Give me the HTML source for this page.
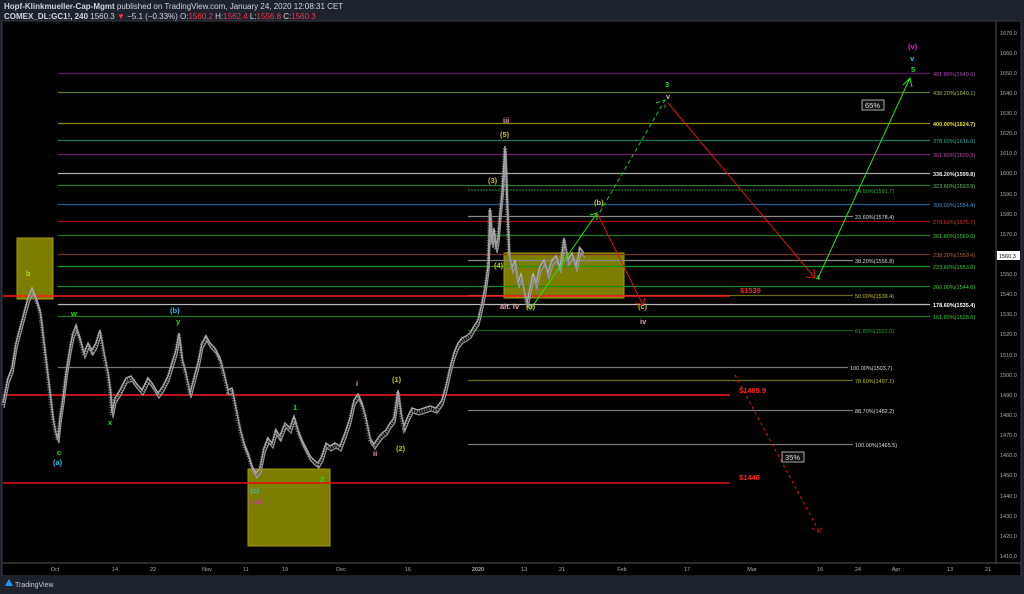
<!DOCTYPE html>
<html><head><meta charset="utf-8"><style>
html,body{margin:0;padding:0;background:#1e222d;width:1024px;height:594px;overflow:hidden;font-family:"Liberation Sans",sans-serif}
.h1{position:absolute;left:4px;top:2px;font-size:8px;color:#d1d4dc}
.h2{position:absolute;left:4px;top:12px;font-size:8px;color:#d1d4dc}
</style></head><body>
<div class="h1"><b>Hopf-Klinkmueller-Cap-Mgmt</b> published on TradingView.com, January 24, 2020 12:08:31 CET</div>
<div class="h2"><b>COMEX_DL:GC1!, 240</b> 1560.3 <span style="color:#f23645">▼</span> −5.1 (−0.33%) O:<span style="color:#f23645">1560.2</span> H:<span style="color:#f23645">1562.4</span> L:<span style="color:#f23645">1556.8</span> C:<span style="color:#f23645">1560.3</span></div>
<svg width="1024" height="594" style="position:absolute;left:0;top:0" font-family="Liberation Sans, sans-serif">
<rect x="2" y="21" width="1019" height="555" fill="#000" stroke="#363a45"/>
<line x1="996" y1="21" x2="996" y2="563" stroke="#555"/>
<line x1="2" y1="563" x2="1021" y2="563" stroke="#555"/>
<rect x="0" y="576" width="1024" height="18" fill="#1e222d"/>
<g font-size="5.5" fill="#aaa">
<text x="1000" y="35">1670.0</text><text x="1000" y="55">1660.0</text><text x="1000" y="75">1650.0</text><text x="1000" y="95">1640.0</text><text x="1000" y="115">1630.0</text><text x="1000" y="135">1620.0</text><text x="1000" y="155">1610.0</text><text x="1000" y="175">1600.0</text><text x="1000" y="196">1590.0</text><text x="1000" y="216">1580.0</text><text x="1000" y="236">1570.0</text><text x="1000" y="276">1550.0</text><text x="1000" y="296">1540.0</text><text x="1000" y="316">1530.0</text><text x="1000" y="336">1520.0</text><text x="1000" y="357">1510.0</text><text x="1000" y="377">1500.0</text><text x="1000" y="397">1490.0</text><text x="1000" y="417">1480.0</text><text x="1000" y="437">1470.0</text><text x="1000" y="457">1460.0</text><text x="1000" y="477">1450.0</text><text x="1000" y="498">1440.0</text><text x="1000" y="518">1430.0</text><text x="1000" y="538">1420.0</text><text x="1000" y="558">1410.0</text>
</g>
<rect x="997" y="251" width="23" height="9" fill="#fff"/><text x="999" y="258" font-size="5.5" fill="#000">1560.3</text>
<g font-size="5.5" fill="#aaa" text-anchor="middle">
<text x="55" y="571">Oct</text><text x="115" y="571">14</text><text x="153" y="571">22</text><text x="207" y="571">Nov</text><text x="246" y="571">11</text><text x="285" y="571">19</text><text x="341" y="571">Dec</text><text x="408" y="571">16</text><text x="478" y="571" font-weight="bold">2020</text><text x="524" y="571">13</text><text x="562" y="571">21</text><text x="622" y="571">Feb</text><text x="687" y="571">17</text><text x="752" y="571">Mar</text><text x="820" y="571">16</text><text x="858" y="571">24</text><text x="896" y="571">Apr</text><text x="950" y="571">13</text><text x="988" y="571">21</text>
</g>
<path d="M5 586 l4 -7 l4 7z" fill="#2196f3"/><text x="15" y="587" font-size="7" fill="#ccc">TradingView</text>
<rect x="17" y="238" width="36" height="61" fill="#7d7d00" stroke="#a0a000"/>
<rect x="248" y="469" width="82" height="77" fill="#7d7d00" stroke="#a0a000"/>
<rect x="504" y="253" width="120" height="45" fill="#7d7d00" stroke="#a0a000"/>
<g stroke-width="1.3">
<line x1="58" y1="73.5" x2="930" y2="73.5" stroke="#5a1a6a"/>
<line x1="58" y1="92.5" x2="930" y2="92.5" stroke="#5b7e23"/>
<line x1="58" y1="123.5" x2="930" y2="123.5" stroke="#8a8a10"/>
<line x1="58" y1="140.5" x2="930" y2="140.5" stroke="#1a7a60"/>
<line x1="58" y1="154.5" x2="930" y2="154.5" stroke="#7a1a6a"/>
<line x1="58" y1="173.5" x2="930" y2="173.5" stroke="#aaa"/>
<line x1="58" y1="185.5" x2="930" y2="185.5" stroke="#2a7a2a"/>
<line x1="58" y1="204.5" x2="930" y2="204.5" stroke="#1e5e8e"/>
<line x1="58" y1="221.5" x2="930" y2="221.5" stroke="#a01010"/>
<line x1="58" y1="235.5" x2="930" y2="235.5" stroke="#1a7a1a"/>
<line x1="58" y1="254.5" x2="930" y2="254.5" stroke="#7a3020"/>
<line x1="58" y1="266.5" x2="930" y2="266.5" stroke="#1a9a1a"/>
<line x1="58" y1="286.5" x2="930" y2="286.5" stroke="#1a8a1a"/>
<line x1="58" y1="304.5" x2="930" y2="304.5" stroke="#bbb"/>
<line x1="58" y1="316.5" x2="930" y2="316.5" stroke="#1a7a1a"/>
<line x1="58" y1="367.5" x2="848" y2="367.5" stroke="#777"/>
<line x1="468" y1="190" x2="853" y2="190" stroke="#1a7a1a" stroke-dasharray="2,1"/>
<line x1="468" y1="216.5" x2="853" y2="216.5" stroke="#888"/>
<line x1="468" y1="260.5" x2="853" y2="260.5" stroke="#888"/>
<line x1="468" y1="295.5" x2="853" y2="295.5" stroke="#6a6a10"/>
<line x1="468" y1="330.5" x2="853" y2="330.5" stroke="#1a5a1a"/>
<line x1="468" y1="380.5" x2="853" y2="380.5" stroke="#6a6a10"/>
<line x1="468" y1="410.5" x2="853" y2="410.5" stroke="#777"/>
<line x1="468" y1="444.5" x2="853" y2="444.5" stroke="#777"/>
<line x1="3" y1="296" x2="730" y2="296" stroke="#ff1a1a" stroke-width="1.6"/>
<line x1="3" y1="395" x2="730" y2="395" stroke="#ff1a1a" stroke-width="1.6"/>
<line x1="3" y1="483" x2="730" y2="483" stroke="#e01010" stroke-width="1.6"/>
</g>
<g font-size="5.5">
<text x="933" y="76" fill="#b040c0">461.80%(1649.6)</text>
<text x="933" y="95" fill="#a0c040">438.20%(1640.1)</text>
<text x="933" y="126" fill="#e0e020" font-weight="bold">400.00%(1624.7)</text>
<text x="933" y="143" fill="#30b0a0">378.60%(1616.0)</text>
<text x="933" y="157" fill="#c040b0">361.80%(1609.3)</text>
<text x="933" y="176" fill="#eee" font-weight="bold">338.20%(1599.8)</text>
<text x="933" y="188" fill="#60c060">323.60%(1593.9)</text>
<text x="933" y="207" fill="#4090d0">300.00%(1584.4)</text>
<text x="933" y="224" fill="#e03030">278.60%(1575.7)</text>
<text x="933" y="238" fill="#30d030">261.80%(1569.0)</text>
<text x="933" y="257" fill="#c06040">238.20%(1559.4)</text>
<text x="933" y="269" fill="#30d030">223.60%(1553.6)</text>
<text x="933" y="289" fill="#30d030">200.00%(1544.0)</text>
<text x="933" y="307" fill="#fff" font-weight="bold">178.60%(1535.4)</text>
<text x="933" y="319" fill="#30d030">161.80%(1528.6)</text>
<text x="855" y="193" fill="#30b030">14.60%(1591.7)</text>
<text x="855" y="219" fill="#ddd">23.60%(1578.4)</text>
<text x="855" y="263" fill="#ddd">38.20%(1556.8)</text>
<text x="855" y="298" fill="#c0c020">50.00%(1539.4)</text>
<text x="855" y="333" fill="#30a030">61.80%(1522.0)</text>
<text x="850" y="370" fill="#ddd">100.00%(1503.7)</text>
<text x="855" y="383" fill="#c0c020">78.60%(1497.1)</text>
<text x="855" y="413" fill="#ddd">88.70%(1482.2)</text>
<text x="855" y="447" fill="#ddd">100.00%(1465.5)</text>
</g>
<defs>
<polyline id="pp" fill="none" points="3,405 8,380 12,370 16,345 20,330 24,315 28,300 32,290 36,300 40,312 44,345 47,370 50,395 53,420 56,435 58,440 60,420 63,400 66,375 70,350 73,335 76,328 80,340 84,355 88,345 92,352 96,345 100,332 104,355 108,375 110,390 112,415 115,400 120,392 126,380 131,378 136,385 142,392 148,380 152,385 158,395 163,388 168,378 172,365 176,352 179,335 182,360 186,375 190,395 194,380 198,365 202,345 206,338 210,345 215,350 220,360 224,375 228,392 232,390 236,410 240,430 244,445 248,455 252,468 256,475 260,470 264,450 268,440 272,445 276,432 280,438 285,425 290,430 294,418 298,432 302,442 306,450 310,458 314,462 318,465 322,458 326,445 330,448 335,445 340,448 345,435 350,420 354,402 358,396 362,405 366,420 370,440 374,446 378,440 382,435 386,432 390,425 394,420 398,392 401,415 404,428 408,418 412,410 418,412 424,410 430,408 436,410 442,402 446,388 450,370 454,355 458,345 462,340 466,338 470,335 474,328 478,322 482,305 485,290 488,268 490,210 492,245 494,230 496,250 498,240 500,215 502,195 505,148 507,205 509,255 512,270 515,262 518,285 521,275 524,292 527,305 530,290 533,275 536,285 540,268 544,262 548,275 552,262 556,258 560,270 564,240 568,262 572,255 576,268 580,250 584,255"/>
</defs>
<use href="#pp" stroke="#777" stroke-width="4" stroke-dasharray="1,1.5"/>
<use href="#pp" stroke="#aaa" stroke-width="1.4" transform="translate(0,-2)"/>
<use href="#pp" stroke="#999" stroke-width="1.2" transform="translate(1,3)"/>
<g fill="none" stroke-width="1">
<path d="M530 310 L597 213 M590 215 l7 -2 l0 7" stroke="#20e020"/>
<path d="M597 213 L643 305 M635 303 l8 2 l2 -7" stroke="#e01010"/>
<path d="M600 212 L665 100 M656 103 l9 -3 l0 8" stroke="#20c020" stroke-dasharray="4,3"/>
<path d="M668 103 L815 278 M805 277 l10 1 l-1 -9" stroke="#e01010"/>
<path d="M818 278 L910 78 M903 85 l7 -7 l2 9" stroke="#20e020"/>
<path d="M735 375 L820 533 M812 528 l8 5 l2 -8" stroke="#e01010" stroke-dasharray="3,3"/>
</g>
<rect x="862" y="100" width="22" height="10" fill="#111" stroke="#aaa"/><text x="865" y="108" font-size="7.5" fill="#ddd">65%</text>
<rect x="782" y="452" width="22" height="10" fill="#111" stroke="#aaa"/><text x="785" y="460" font-size="7.5" fill="#ddd">35%</text>
<g font-size="7.5" font-weight="bold">
<text x="740" y="293" fill="#ff2020">$1539</text>
<text x="739" y="393" fill="#ff2020">$1489.9</text>
<text x="739" y="480" fill="#ff2020">$1446</text>
<text x="908" y="49" fill="#e020e0">(v)</text>
<text x="910" y="61" fill="#20c0e0">v</text>
<text x="911" y="72" fill="#20e020">5</text>
<text x="665" y="87" fill="#20e020">3</text>
<text x="666" y="99" fill="#f0a0b0">v</text>
<text x="816" y="280" fill="#20e020">4</text>
<text x="503" y="123" fill="#f0a0b0">iii</text>
<text x="500" y="137" fill="#c0c020">(5)</text>
<text x="488" y="183" fill="#c0c020">(3)</text>
<text x="494" y="268" fill="#c0c020">(4)</text>
<text x="594" y="205" fill="#c0c020">(b)</text>
<text x="500" y="309" fill="#f0a0b0">alt. iv</text>
<text x="526" y="309" fill="#c0c020">(a)</text>
<text x="638" y="309" fill="#c0c020">(c)</text>
<text x="640" y="324" fill="#f0a0b0">iv</text>
<text x="26" y="276" fill="#a0e020">b</text>
<text x="71" y="316" fill="#20e020">w</text>
<text x="170" y="313" fill="#20c0e0">(b)</text>
<text x="176" y="324" fill="#20e020">y</text>
<text x="108" y="425" fill="#20e020">x</text>
<text x="57" y="455" fill="#20e020">c</text>
<text x="53" y="465" fill="#20c0e0">(a)</text>
<text x="293" y="410" fill="#20e020">1</text>
<text x="320" y="482" fill="#20e020">2</text>
<text x="250" y="493" fill="#20c0e0">(c)</text>
<text x="250" y="504" fill="#e020e0">(iv)</text>
<text x="392" y="382" fill="#c0c020">(1)</text>
<text x="396" y="451" fill="#c0c020">(2)</text>
<text x="356" y="386" fill="#f0a0b0">i</text>
<text x="373" y="456" fill="#f0a0b0">ii</text>
</g>
</svg>
</body></html>
